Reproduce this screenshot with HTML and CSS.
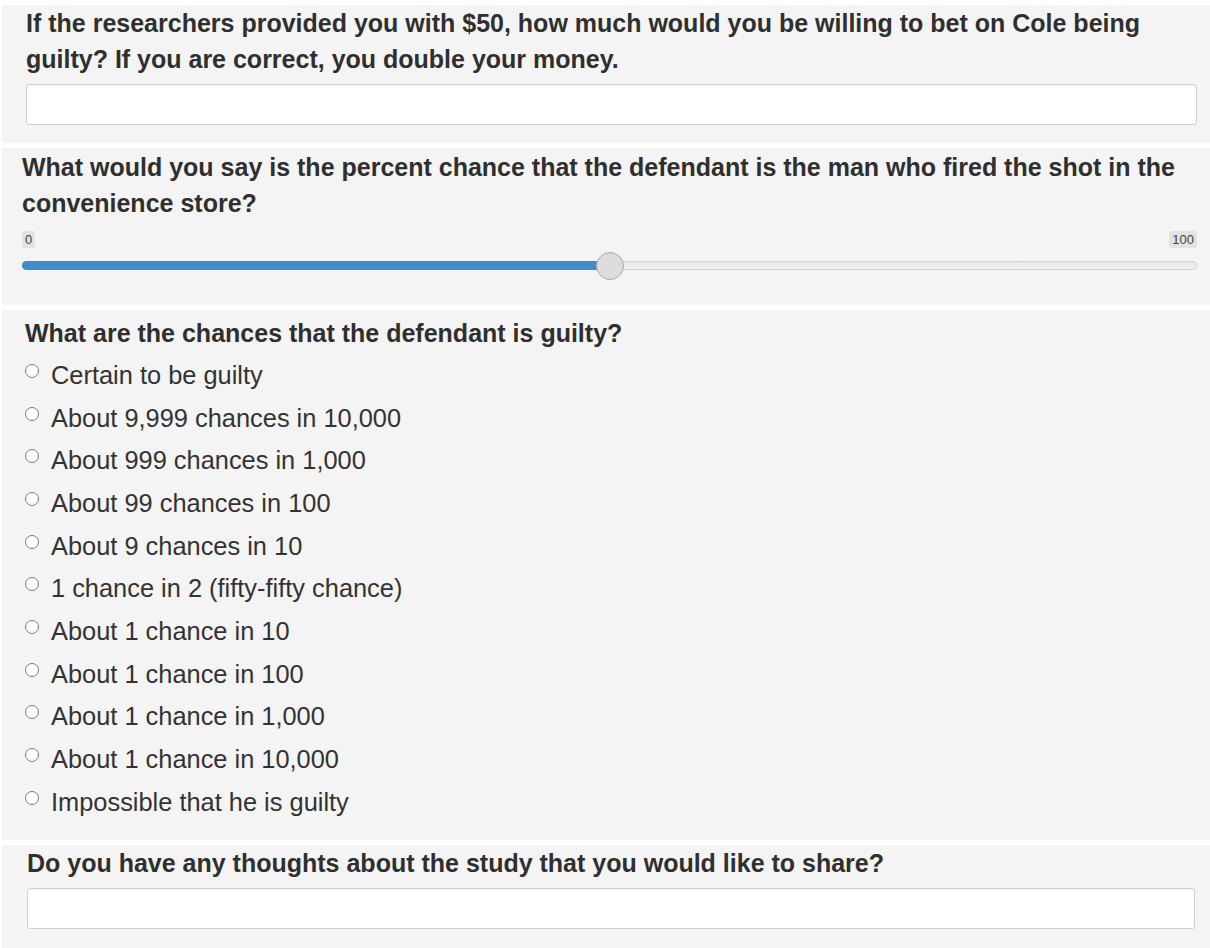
FILE: index.html
```html
<!DOCTYPE html>
<html lang="en">
<head>
<meta charset="utf-8">
<title>Survey</title>
<link rel="stylesheet" href="styles.css">
</head>
<body>
<div class="page">
  <section class="panel panel-bet">
    <label class="question" for="bet">If the researchers provided you with $50, how much would you be willing to bet on Cole being guilty? If you are correct, you double your money.</label>
    <input class="text-input" id="bet" type="text">
  </section>

  <section class="panel panel-slider">
    <div class="question">What would you say is the percent chance that the defendant is the man who fired the shot in the convenience store?</div>
    <div class="slider-labels">
      <span class="slider-label">0</span>
      <span class="slider-label">100</span>
    </div>
    <div class="slider-track">
      <div class="slider-fill" style="width: 50%"></div>
      <div class="slider-handle" style="left: 50%"></div>
    </div>
  </section>

  <section class="panel panel-radio">
    <div class="question">What are the chances that the defendant is guilty?</div>
    <ul class="options">
      <li class="option"><span class="radio"></span><span>Certain to be guilty</span></li>
      <li class="option"><span class="radio"></span><span>About 9,999 chances in 10,000</span></li>
      <li class="option"><span class="radio"></span><span>About 999 chances in 1,000</span></li>
      <li class="option"><span class="radio"></span><span>About 99 chances in 100</span></li>
      <li class="option"><span class="radio"></span><span>About 9 chances in 10</span></li>
      <li class="option"><span class="radio"></span><span>1 chance in 2 (fifty-fifty chance)</span></li>
      <li class="option"><span class="radio"></span><span>About 1 chance in 10</span></li>
      <li class="option"><span class="radio"></span><span>About 1 chance in 100</span></li>
      <li class="option"><span class="radio"></span><span>About 1 chance in 1,000</span></li>
      <li class="option"><span class="radio"></span><span>About 1 chance in 10,000</span></li>
      <li class="option"><span class="radio"></span><span>Impossible that he is guilty</span></li>
    </ul>
  </section>

  <section class="panel panel-thoughts">
    <label class="question" for="thoughts">Do you have any thoughts about the study that you would like to share?</label>
    <input class="text-input" id="thoughts" type="text">
  </section>
</div>
</body>
</html>
```

FILE: styles.css
```css
html, body {
  margin: 0;
  padding: 0;
  background: #ffffff;
}

body {
  font-family: "Liberation Sans", Arial, sans-serif;
  color: #333333;
}

.page {
  padding-top: 5px;
  display: flex;
  flex-direction: column;
  gap: 5px;
}

.panel {
  background: #f4f4f4;
  margin-left: 2px;
}

.question {
  display: block;
  font-size: 25px;
  font-weight: bold;
  line-height: 36px;
  color: #2f2f2f;
}

.text-input {
  display: block;
  box-sizing: border-box;
  width: 100%;
  height: 41px;
  margin: 7px 0 0 0;
  background: #ffffff;
  border: 1px solid #cfcfcf;
  border-radius: 3px;
  box-shadow: inset 0 1px 1px rgba(0, 0, 0, 0.04);
  font-family: inherit;
  font-size: 18px;
}

.panel-bet {
  padding: 0 13px 18px 24px;
}

.panel-slider {
  padding: 1px 13px 35px 20px;
}

.slider-labels {
  display: flex;
  justify-content: space-between;
  margin-top: 10px;
}

.slider-label {
  display: inline-block;
  background: #e2e2e2;
  color: #444444;
  font-size: 13px;
  line-height: 17px;
  padding: 0 3px;
  border-radius: 3px;
}

.slider-track {
  position: relative;
  height: 9px;
  margin-top: 13px;
  border-radius: 5px;
  background: linear-gradient(#e6e6e6, #f2f2f2);
  box-shadow: inset 0 0 0 1px #d2d2d2;
}

.slider-fill {
  height: 100%;
  background: #428bca;
  border-radius: 5px 0 0 5px;
}

.slider-handle {
  position: absolute;
  top: 50%;
  width: 26px;
  height: 26px;
  margin-left: -14px;
  margin-top: -14px;
  border-radius: 50%;
  background: #dcdcdc;
  border: 1px solid #ababab;
}

.panel-radio {
  padding: 5px 13px 17px 23px;
}

.options {
  list-style: none;
  margin: 3px 0 0 0;
  padding: 0;
}

.option {
  display: flex;
  align-items: flex-start;
  font-size: 25.4px;
  line-height: 42.67px;
  color: #333333;
}

.radio {
  flex: none;
  box-sizing: border-box;
  width: 14px;
  height: 14px;
  margin: 10px 12px 0 0;
  border: 1px solid #7a7a7a;
  border-radius: 50%;
  background: #ffffff;
}

.panel-thoughts {
  padding: 0 15px 20px 25px;
}
```
